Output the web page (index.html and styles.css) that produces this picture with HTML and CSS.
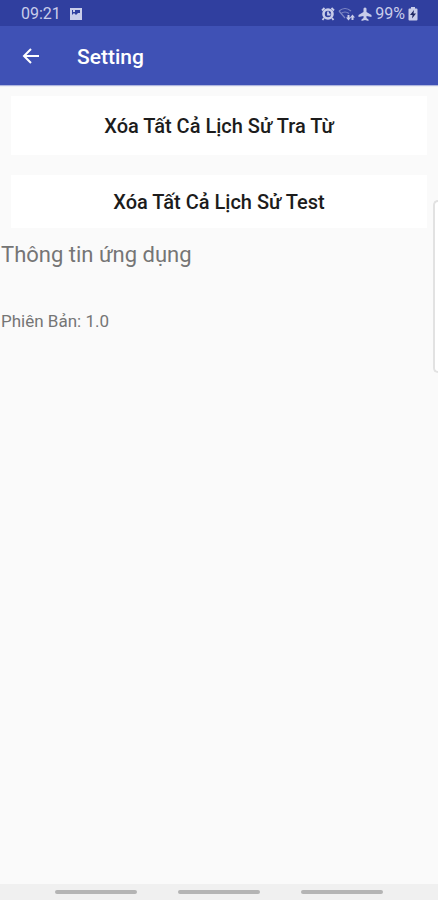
FILE: index.html
```html
<!DOCTYPE html>
<html lang="vi">

<head>
    <meta charset="UTF-8">
    <meta name="viewport" content="width=device-width, initial-scale=1">
    <title>Setting</title>
    <link rel="stylesheet" href="styles.css">
</head>

<body>
    <!-- Phone status bar -->
    <div class="status-bar">
        <div class="status-left">
            <span>09:21</span>
            <svg width="14" height="14" viewBox="0 0 14 14">
                <path fill="currentColor" fill-rule="evenodd" d="M1 1h12v12H1zM3 3v5l2-2 2 2 2-2h2V3zM4 3h2v2H4z" />
            </svg>
        </div>
        <div class="status-right">
            <!-- alarm -->
            <svg width="14" height="14" viewBox="0 0 14 14">
                <circle cx="7" cy="7" r="4.5" fill="none" stroke="currentColor" stroke-width="2.6" />
                <path d="M7 4.500v3h2.500M1 3.500L3.500 1M13 3.500L10.500 1M3 11l-1.500 2M11 11l1.500 2" fill="none" stroke="currentColor" stroke-width="1.8" />
            </svg>
            <!-- wifi -->
            <svg class="wifi" width="17" height="14" viewBox="0 0 17 14">
                <path class="faint" d="M1 4q6-5 12 0M3 6.500q4-3 8 0M1 4l6 7" fill="none" stroke="currentColor" stroke-width="1.2" />
                <path d="M9.500 8h2v2.500H13l-2.500 3-2.500-3h1.500zM13.500 13v-2.500H12l2.500-3 2.500 3h-1.500V13z" fill="currentColor" />
            </svg>
            <!-- airplane mode -->
            <svg width="14" height="14" viewBox="0 0 14 14">
                <path fill="currentColor" d="M5.500 1.500q1.500-2 3 0V5l5 3v2L8.500 9V11l2 1.500V14L7 13l-3.500 1v-1.500l2-1.500V9L.5 10V8l5-3z" />
            </svg>
            <span>99%</span>
            <!-- battery -->
            <svg width="10" height="14" viewBox="0 0 10 14">
                <path fill="currentColor" d="M3 0h4v1.500h1.500q1 0 1 1v10q0 1-1 1h-7q-1 0-1-1v-10q0-1 1-1H3z" />
                <path class="bolt" d="M6 3L2 8h2.500L4 11.500 8 6.500H5.500z" />
            </svg>
        </div>
    </div>

    <header class="app-bar">
        <button type="button" class="back" aria-label="Back">
            <svg width="18" height="18" viewBox="0 0 18 18" fill="none" stroke="currentColor" stroke-width="2">
                <path d="M17 8H2M9 1L2 8 9 15" />
            </svg>
        </button>
        <h1>Setting</h1>
    </header>

    <main>
        <div class="actions">
            <button type="button" class="action action-first">Xóa Tất Cả Lịch Sử Tra Từ</button>
            <button type="button" class="action">Xóa Tất Cả Lịch Sử Test</button>
        </div>
        <h2>Thông tin ứng dụng</h2>
        <p class="version">Phiên Bản: 1.0</p>
    </main>

    <!-- Edge panel handle -->
    <div class="edge-handle"></div>

    <nav class="nav-bar">
        <button type="button" aria-label="Recent apps"></button>
        <button type="button" aria-label="Home"></button>
        <button type="button" aria-label="Return"></button>
    </nav>
</body>

</html>
```
FILE: styles.css
```css
* {
    margin: 0;
    padding: 0;
    box-sizing: border-box;
}

body {
    display: flex;
    flex-direction: column;
    min-height: 100vh;
    font-family: Roboto, sans-serif;
    background-color: #fafafa;
    color: #757575;
}

button {
    border: none;
    background: none;
    font-family: inherit;
    cursor: pointer;
}

svg {
    display: block;
}

/* Status bar */

.status-bar {
    display: flex;
    justify-content: space-between;
    align-items: center;
    height: 26px;
    padding: 2px 20px 0 21px;
    background-color: #303f9f;
    color: #c9cdea;
    font-size: 16px;
    line-height: 24px;
}

.status-left,
.status-right {
    display: flex;
    align-items: center;
}

.status-left {
    gap: 8px;
}

.status-right {
    gap: 3px;
}

.wifi .faint {
    opacity: 0.5;
}

.bolt {
    fill: #1c2560;
}

/* App bar */

.app-bar {
    display: flex;
    align-items: center;
    gap: 37px;
    height: 59px;
    padding: 2px 22px 0;
    background-color: #3f51b5;
    color: #fff;
    box-shadow: 0 1px 1px rgba(63, 81, 181, 0.4);
}

.back {
    color: inherit;
}

h1 {
    font-size: 21px;
    font-weight: 500;
    line-height: 28px;
}

/* Content */

main {
    flex: 1;
}

.actions {
    display: flex;
    flex-direction: column;
    gap: 20px;
    padding: 11px 11px 0;
}

.action {
    height: 53px;
    padding-top: 1px;
    background-color: #fff;
    color: #1c1c1c;
    font-size: 20px;
    font-weight: 500;
    line-height: 28px;
}

.action-first {
    height: 59px;
}

h2 {
    margin-top: 13px;
    padding-left: 1px;
    font-size: 22px;
    font-weight: 400;
    line-height: 28px;
}

.version {
    margin-top: 40px;
    padding-left: 1px;
    font-size: 17px;
    line-height: 24px;
}

.edge-handle {
    position: absolute;
    top: 200px;
    right: 0;
    width: 5px;
    height: 173px;
    border: 2px solid #e2e2e2;
    border-right: none;
    border-radius: 5px 0 0 5px;
    background-color: #fff;
}

/* Navigation bar */

.nav-bar {
    display: flex;
    justify-content: center;
    align-items: center;
    gap: 41px;
    height: 16px;
    background-color: #f0f0f0;
}

.nav-bar button {
    width: 82px;
    height: 4px;
    border-radius: 2px;
    background-color: #b4b4b4;
}
```
